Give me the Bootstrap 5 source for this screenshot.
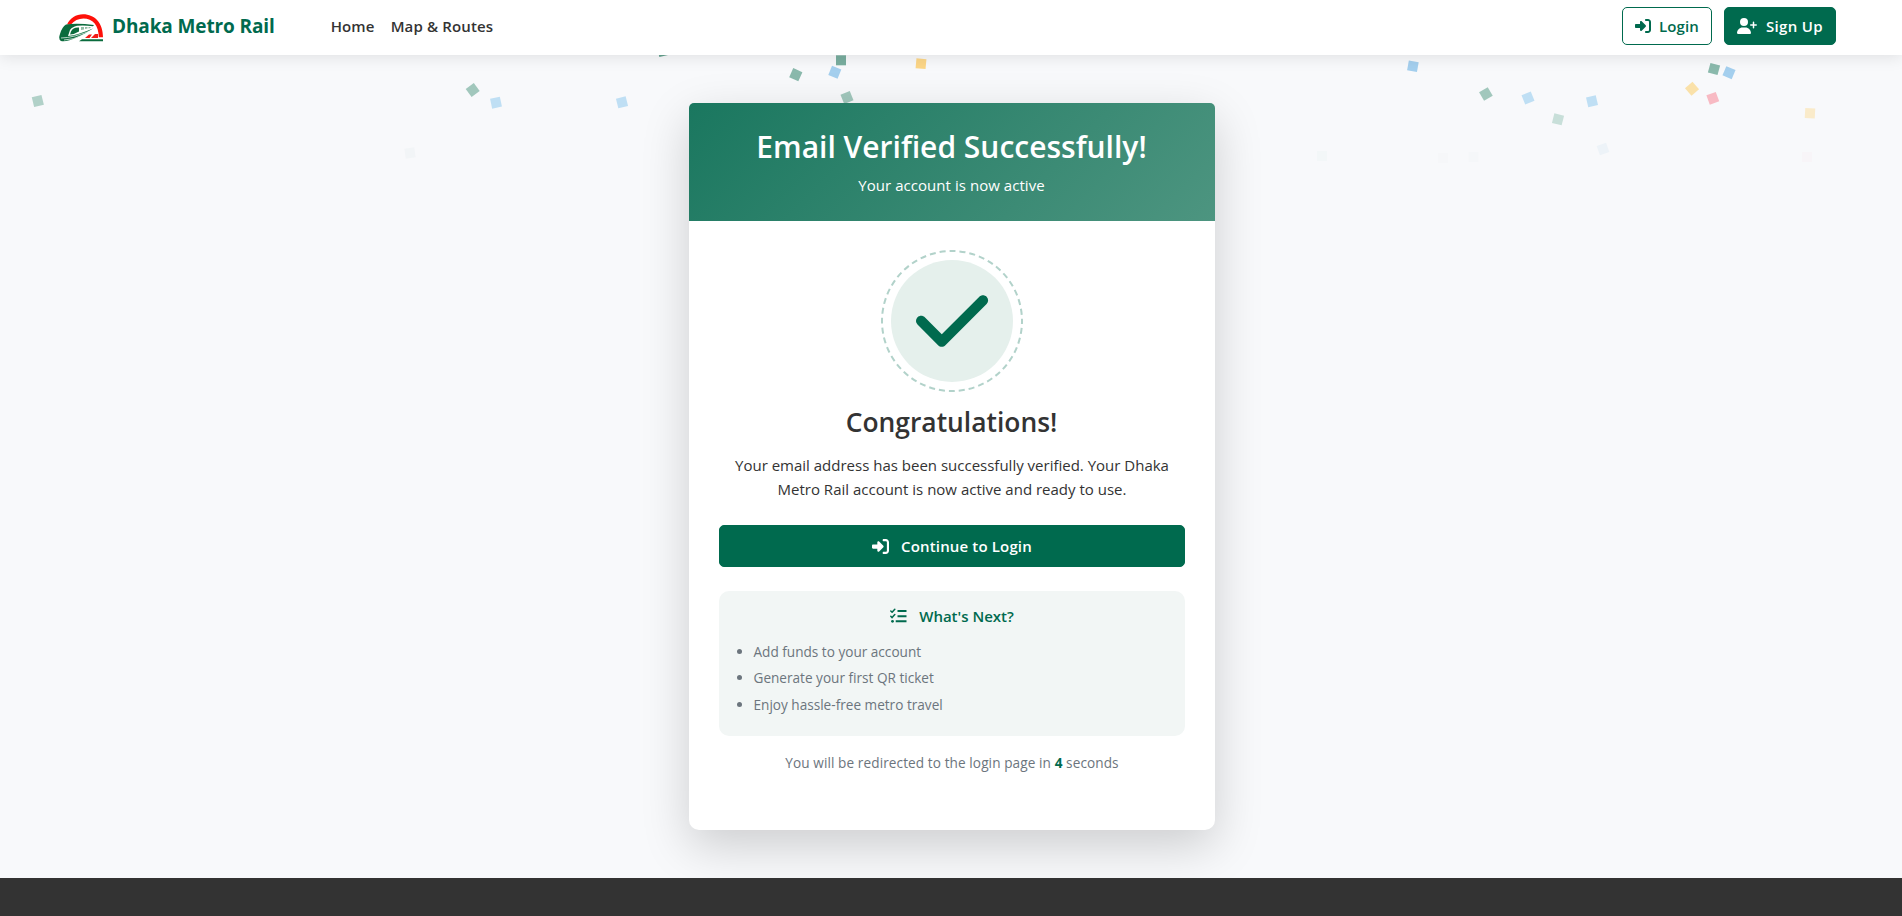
<!DOCTYPE html>
<html lang="en">
<head>
<meta charset="utf-8">
<meta name="viewport" content="width=device-width, initial-scale=1">
<title>Email Verified - Dhaka Metro Rail</title>
<link href="https://cdn.jsdelivr.net/npm/bootstrap@5.3.0/dist/css/bootstrap.min.css" rel="stylesheet">
<style>
  :root { --metro: #006a4e; --ink: #333; }
  body { font-family: "Open Sans", "Noto Sans", sans-serif; font-size: 15px; line-height: 24px; color: var(--ink); background: #f8f9fb; height: 916px; overflow: hidden; }
  .topbar { height: 55px; padding: 0 66px 0 59px; background: #fff; box-shadow: 0 2px 15px rgba(0,0,0,.1); z-index: 20; }
  .topbar > * { margin-top: -3px; }
  .topbar .brand-link { margin-top: 0; }
  .brand-name { font-size: 19px; font-weight: 700; letter-spacing: -.12px; color: var(--metro); margin: -4px 56px 0 8px; }
  .top-link { font-weight: 600; font-size: 15px; letter-spacing: .15px; color: var(--ink); text-decoration: none; }
  .metro-btn { --bs-btn-border-radius: 5px; --bs-btn-padding-y: 0; --bs-btn-padding-x: 12px; --bs-btn-font-weight: 600; --bs-btn-font-size: 15px; --bs-btn-color: #fff; --bs-btn-bg: var(--metro); --bs-btn-border-color: var(--metro); --bs-btn-hover-bg: #00563f; height: 38px; letter-spacing: .15px; white-space: nowrap; }
  .metro-btn-outline { --bs-btn-color: var(--metro); --bs-btn-bg: #fff; }
  .login-btn { width: 90px; margin-right: 12px; }
  .signup-btn { width: 112px; letter-spacing: .35px; }
  .glyph { fill: currentColor; flex: none; }
  .stage { height: 823px; padding: 48px 0 0 2px; }
  .confetti { position: absolute; top: 0; left: 0; z-index: 0; }
  .verify-card { width: 526px; height: 727px; border-radius: 10px; z-index: 2; background: #fff; box-shadow: 0 16px 48px rgba(0,0,0,.175); }
  .verify-head { height: 118px; padding: 24px 1px 0 0; border-radius: 5px 5px 0 0; color: #fff; background: linear-gradient(135deg, #1a775f, #4d9580); }
  .verify-head h2 { font-size: 30px; font-weight: 600; line-height: 40px; margin-bottom: 6px; }
  .verify-head div { letter-spacing: .05px; }
  .verify-body { padding: 29px 30px; }
  .ring { width: 142px; height: 142px; }
  .congrats { font-size: 26.4px; font-weight: 600; line-height: 34px; margin: 13px 0 14px; padding-right: 1px; }
  .wide-btn { height: 42px; margin: 24px 0 24px; letter-spacing: .15px; }
  .next-box { background: #f2f6f5; border-radius: 10px; height: 145px; padding-top: 13px; }
  .next-title { color: var(--metro); font-weight: 600; }
  .next-list { font-size: 13.6px; line-height: 21px; color: #6c757d; padding-left: 34.5px; margin: 13px 0 0; }
  .next-list li { margin-bottom: 5.4px; }
  .redirect { font-size: 13.6px; letter-spacing: .09px; color: #6c757d; margin: 15px 0 0; }
  .redirect b { color: var(--metro); }
  .site-foot { height: 38px; background: #333; z-index: 3; }
</style>
</head>
<body>
<svg class="d-none">
  <symbol id="i-login" viewBox="0 0 512 512"><path d="M352 96h64c17.700 0 32 14.300 32 32v256c0 17.700-14.300 32-32 32h-64c-17.700 0-32 14.300-32 32s14.300 32 32 32h64c53 0 96-43 96-96V128c0-53-43-96-96-96h-64c-17.700 0-32 14.300-32 32s14.300 32 32 32zm-9.400 182.600c12.500-12.500 12.500-32.800 0-45.300l-128-128c-9.200-9.200-22.900-11.900-34.900-6.900S160 115.100 160 128v64H32c-17.700 0-32 14.300-32 32v64c0 17.700 14.300 32 32 32h128v64c0 12.900 7.800 24.600 19.800 29.600s25.700 2.200 34.900-6.900l128-128z"/></symbol>
  <symbol id="i-userplus" viewBox="0 0 640 512"><path d="M96 128a128 128 0 1 1 256 0 128 128 0 1 1-256 0zM0 482.300C0 383.800 79.800 304 178.300 304h91.400C368.200 304 448 383.800 448 482.300c0 16.400-13.300 29.700-29.700 29.700H29.700C13.300 512 0 498.700 0 482.300zM504 312v-64h-64c-13.300 0-24-10.700-24-24s10.700-24 24-24h64v-64c0-13.300 10.700-24 24-24s24 10.700 24 24v64h64c13.300 0 24 10.700 24 24s-10.700 24-24 24h-64v64c0 13.300-10.700 24-24 24s-24-10.700-24-24z"/></symbol>
</svg>

<nav class="topbar d-flex align-items-center position-relative">
  <a href="#" class="brand-link d-flex align-items-center text-decoration-none">
    <svg width="45" height="28" viewBox="0 0 45 28"><path d="M8 10.500C11 4 17 .2 24 .2c12 0 20 9 20 23h-4.200C39.800 11 33.500 4.400 24.500 4.400c-5 0-9.500 2-12.500 6.100z" fill="#fe1009"/><path d="M7 10.500Q18 8.800 35 11l-1 1.200q-10-1.400-16-.4-5 1.200-7 4.200l-2 6q10-1 25-7.500-10 6.500-16 9Q8 28 2 27q-3-2-1-7 2-7 6-9.500z" fill="#0a6b3d"/><path d="M12 17.500q2-4.500 8-4v4q-4 2.500-9 3z" fill="#0a6b3d"/><path d="M22 16v-3h3v2.500zm4-1v-2h2.500v1.500zm3.500-.5v-1.500h2v1z" fill="#8fbca4"/><path d="M2 24q12 0 33-8.500M5 26q9 0 20-5.500" fill="none" stroke="#fff" stroke-width=".7"/><path d="M26 24l4-3.500h3L30.500 24zm6 0l4-4h3v4z" fill="#f21b16"/><path d="M23 25.300h21v1.900H20z" fill="#0a6b3d"/></svg>
    <span class="brand-name">Dhaka Metro Rail</span>
  </a>
  <a href="#" class="top-link me-3">Home</a>
  <a href="#" class="top-link">Map &amp; Routes</a>
  <a href="#" class="btn metro-btn metro-btn-outline login-btn d-flex align-items-center justify-content-between ms-auto"><svg class="glyph" width="16" height="16"><use href="#i-login"/></svg><span>Login</span></a>
  <a href="#" class="btn metro-btn signup-btn d-flex align-items-center justify-content-between"><svg class="glyph" width="20" height="16"><use href="#i-userplus"/></svg><span>Sign Up</span></a>
</nav>

<svg class="confetti" width="1902" height="170">
  <g fill="#b1d1c8"><rect x="-5" y="-5" width="10" height="10" transform="translate(37.800 101) rotate(-14)"/><rect x="-5" y="-5" width="10" height="10" transform="translate(1558 119.300) rotate(14)" fill="#c8dfd9"/></g>
  <g fill="#a1c7bc"><rect x="-5" y="-5" width="10" height="10" transform="translate(472.700 90) rotate(-36)"/><rect x="-5" y="-5" width="10" height="10" transform="translate(847 97.500) rotate(-22)"/><rect x="-5" y="-5" width="10" height="10" transform="translate(1485.900 94) rotate(-30)"/></g>
  <g fill="#8ab9ac"><rect x="-5" y="-5" width="10" height="10" transform="translate(795.800 74.700) rotate(24)"/><rect x="-5" y="-5" width="10" height="10" transform="translate(1714 69) rotate(15)"/><rect x="-5" y="-5" width="10" height="10" transform="translate(841 60.300)" fill="#79ae9f"/><rect x="-5" y="-5" width="10" height="10" transform="translate(663 51) rotate(-14)" fill="#65a28f"/></g>
  <g fill="#bfdff4"><rect x="-5" y="-5" width="10" height="10" transform="translate(496 102.700) rotate(-12)"/><rect x="-5" y="-5" width="10" height="10" transform="translate(622 102.300) rotate(-14)"/><rect x="-5" y="-5" width="10" height="10" transform="translate(1592 101.300) rotate(-13)"/><rect x="-5" y="-5" width="10" height="10" transform="translate(1528 98) rotate(-22)"/></g>
  <g fill="#a4cfee"><rect x="-5" y="-5" width="10" height="10" transform="translate(834.800 72.300) rotate(22)"/><rect x="-5" y="-5" width="10" height="10" transform="translate(1729 72.700) rotate(23)"/><rect x="-5" y="-5" width="10" height="10" transform="translate(1412.900 66.300) rotate(10)"/></g>
  <rect x="-5" y="-5" width="10" height="10" transform="translate(921 63.700) rotate(5)" fill="#fcd687"/>
  <rect x="-5" y="-5" width="10" height="10" transform="translate(1692 88.700) rotate(-41)" fill="#fae1a9"/>
  <rect x="-5" y="-5" width="10" height="10" transform="translate(1810 113.300) rotate(3)" fill="#faebca"/>
  <rect x="-5" y="-5" width="10" height="10" transform="translate(1712.800 98.300) rotate(-20)" fill="#f8bac3"/>
  <rect x="-5" y="-5" width="10" height="10" transform="translate(1603 149) rotate(-19)" fill="#edf3f8"/>
  <rect x="-5" y="-5" width="10" height="10" transform="translate(410 153) rotate(-8)" fill="#f2f5f7"/>
  <g fill="#f3f7f8"><rect x="1317" y="151" width="10" height="10"/><rect x="1438" y="153" width="10" height="10" fill="#f6f7f9"/><rect x="1468.500" y="152" width="10" height="10" fill="#f5f7f9"/><rect x="1802" y="152" width="10" height="10" fill="#f8f5f8"/></g>
</svg>

<main class="stage d-flex justify-content-center">
  <div class="verify-card text-center position-relative">
    <div class="verify-head"><h2>Email Verified Successfully!</h2><div>Your account is now active</div></div>
    <div class="verify-body">
      <svg class="ring d-block mx-auto" viewBox="0 0 142 142"><circle cx="71" cy="71" r="61" fill="#e5f0ec"/><circle cx="71" cy="71" r="70" fill="none" stroke="#b2d2ca" stroke-width="2" stroke-dasharray="6 3.996" stroke-dashoffset="3"/><path transform="translate(35 29.700) scale(.161)" fill="#006a4e" d="M438.600 105.400c12.500 12.500 12.500 32.800 0 45.300l-256 256c-12.500 12.500-32.800 12.500-45.300 0l-128-128c-12.500-12.500-12.500-32.800 0-45.300s32.800-12.500 45.300 0L160 338.700 393.400 105.400c12.500-12.500 32.800-12.500 45.300 0z"/></svg>
      <h3 class="congrats">Congratulations!</h3>
      <div>Your email address has been successfully verified. Your Dhaka<br>Metro Rail account is now active and ready to use.</div>
      <a href="#" class="btn metro-btn wide-btn w-100 d-flex align-items-center justify-content-center"><svg class="glyph" width="17" height="17"><use href="#i-login"/></svg><span class="ms-2 ps-1">Continue to Login</span></a>
      <section class="next-box">
        <div class="next-title d-flex align-items-center justify-content-center">
          <svg class="glyph" width="17" height="16" viewBox="0 0 17 16"><path d="M.8 3l1.300 1.300L4.800 1.200M.8 8.300l1.300 1.300 2.700-3.100" fill="none" stroke="currentColor" stroke-width="1.500" stroke-linecap="round" stroke-linejoin="round"/><circle cx="2.500" cy="13.300" r="1.400"/><path d="M7.500 2h9v2h-9zM7.500 7.200h9v2h-9zM5.700 12.300h10.800v2H5.700z"/></svg>
          <span class="ms-2 ps-1">What's Next?</span>
        </div>
        <ul class="next-list text-start"><li>Add funds to your account</li><li>Generate your first QR ticket</li><li>Enjoy hassle-free metro travel</li></ul>
      </section>
      <p class="redirect">You will be redirected to the login page in <b>4</b> seconds</p>
    </div>
  </div>
</main>
<footer class="site-foot position-relative"></footer>
<script src="https://cdn.jsdelivr.net/npm/bootstrap@5.3.0/dist/js/bootstrap.bundle.min.js"></script>
</body>
</html>
